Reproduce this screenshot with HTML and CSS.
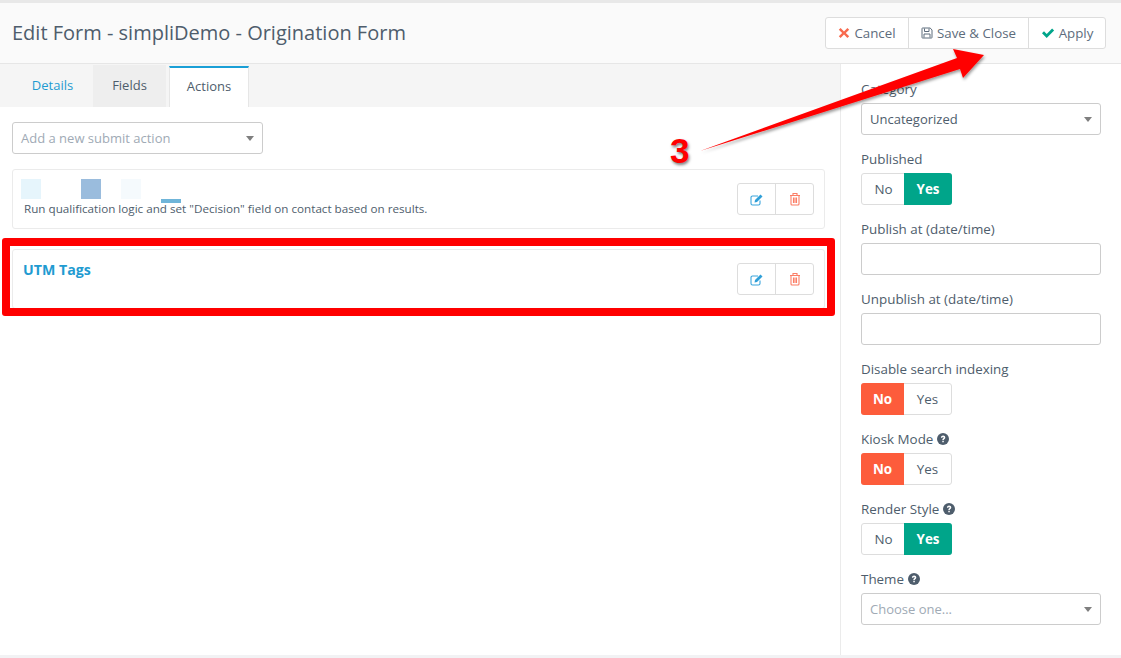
FILE: index.html
```html
<!DOCTYPE html>
<html lang="en">
<head>
    <meta charset="UTF-8">
    <title>Edit Form - simpliDemo - Origination Form</title>
    <link rel="stylesheet" href="styles.css">
</head>
<body>
    <div class="page">
        <!-- Header -->
        <header class="page-header">
            <h1>Edit Form - simpliDemo - Origination Form</h1>
            <div class="btn-group">
                <button class="btn btn-cancel">
                    <svg class="icon" viewBox="0 0 12 12"><path d="M2.6 1 6 4.400 9.400 1 11.200 2.800 7.800 6l3.400 3.200-1.800 1.800L6 7.600 2.600 11 .8 9.200 4.200 6 .8 2.800z" fill="#f86b4f"/></svg>
                    Cancel
                </button>
                <button class="btn btn-save">
                    <svg class="icon" viewBox="0 0 12 12"><path d="M1.500 1h7.600L11 2.900v7.600a.5.5 0 0 1-.5.5h-9a.5.5 0 0 1-.5-.5v-9a.5.5 0 0 1 .5-.5zM3.500 1.500v3h4.500v-3M3 10.500V7h6v3.500" fill="none" stroke="#5d6c7c" stroke-width="1"/></svg>
                    Save &amp; Close
                </button>
                <button class="btn btn-apply">
                    <svg class="icon icon-wide" viewBox="0 0 13 12"><path d="M.5 6.300 2.500 4.300l2.700 2.700 5.400-5.400 2 2-7.400 7.400z" fill="#00a58a"/></svg>
                    Apply
                </button>
            </div>
        </header>

        <div class="content">
            <!-- Main column -->
            <main class="main-col">
                <nav class="tabs">
                    <a class="tab tab-details">Details</a>
                    <a class="tab tab-fields">Fields</a>
                    <a class="tab tab-actions">Actions</a>
                </nav>

                <div class="tab-body">
                    <div class="select select-add">
                        <span class="placeholder">Add a new submit action</span>
                        <span class="caret"></span>
                    </div>

                    <div class="card">
                        <div class="card-text">
                            <div class="swatches">
                                <span class="swatch swatch-a"></span>
                                <span class="swatch swatch-b"></span>
                                <span class="swatch swatch-c"></span>
                                <span class="swatch swatch-d"></span>
                            </div>
                            <p class="card-desc">Run qualification logic and set "Decision" field on contact based on results.</p>
                        </div>
                        <div class="card-btns">
                            <button class="card-btn">
                                <svg class="icon-edit" viewBox="0 0 14 13"><path d="M10 7.500v3A1.500 1.500 0 0 1 8.500 12h-6A1.500 1.500 0 0 1 1 10.500v-6A1.500 1.500 0 0 1 2.500 3H8" fill="none" stroke="#3ba5dc" stroke-width="1.100"/><path d="M4.500 9.500 5 7l5.500-5.500 2 2L7 9z" fill="#2f9fd8"/></svg>
                            </button>
                            <button class="card-btn">
                                <svg class="icon-trash" viewBox="0 0 12 14"><path d="M1 3.500h10M4 3.500V1.500h4v2M2 3.500V12a1 1 0 0 0 1 1h6a1 1 0 0 0 1-1V3.500M4.500 5.500v5.500M6 5.500v5.500M7.500 5.500v5.500" fill="none" stroke="#fb7e66" stroke-width="1.100"/></svg>
                            </button>
                        </div>
                    </div>

                    <div class="card">
                        <div class="card-text">
                            <a class="card-title">UTM Tags</a>
                        </div>
                        <div class="card-btns">
                            <button class="card-btn">
                                <svg class="icon-edit" viewBox="0 0 14 13"><path d="M10 7.500v3A1.500 1.500 0 0 1 8.500 12h-6A1.500 1.500 0 0 1 1 10.500v-6A1.500 1.500 0 0 1 2.500 3H8" fill="none" stroke="#3ba5dc" stroke-width="1.100"/><path d="M4.500 9.500 5 7l5.500-5.500 2 2L7 9z" fill="#2f9fd8"/></svg>
                            </button>
                            <button class="card-btn">
                                <svg class="icon-trash" viewBox="0 0 12 14"><path d="M1 3.500h10M4 3.500V1.500h4v2M2 3.500V12a1 1 0 0 0 1 1h6a1 1 0 0 0 1-1V3.500M4.500 5.500v5.500M6 5.500v5.500M7.500 5.500v5.500" fill="none" stroke="#fb7e66" stroke-width="1.100"/></svg>
                            </button>
                        </div>
                    </div>
                </div>
            </main>

            <!-- Sidebar -->
            <aside class="side-col">
                <div class="field">
                    <label>Category</label>
                    <div class="select"><span class="value">Uncategorized</span><span class="caret"></span></div>
                </div>
                <div class="field">
                    <label>Published</label>
                    <div class="toggle"><span class="opt opt-no">No</span><span class="opt opt-yes on-yes">Yes</span></div>
                </div>
                <div class="field">
                    <label>Publish at (date/time)</label>
                    <div class="input"></div>
                </div>
                <div class="field">
                    <label>Unpublish at (date/time)</label>
                    <div class="input"></div>
                </div>
                <div class="field">
                    <label>Disable search indexing</label>
                    <div class="toggle"><span class="opt opt-no on-no">No</span><span class="opt opt-yes">Yes</span></div>
                </div>
                <div class="field">
                    <label>Kiosk Mode <svg class="help" viewBox="0 0 12 12"><circle cx="6" cy="6" r="6" fill="#4e5d6c"/><path d="M3.900 4.700C4 3.400 4.900 2.600 6.100 2.600c1.300 0 2.200.8 2.200 1.900 0 1.500-1.500 1.500-1.500 2.600H5.300c0-1.800 1.400-1.700 1.400-2.600 0-.4-.3-.6-.7-.6-.4 0-.7.300-.7.800zM5.300 7.800h1.500v1.500H5.300z" fill="#fff"/></svg></label>
                    <div class="toggle"><span class="opt opt-no on-no">No</span><span class="opt opt-yes">Yes</span></div>
                </div>
                <div class="field">
                    <label>Render Style <svg class="help" viewBox="0 0 12 12"><circle cx="6" cy="6" r="6" fill="#4e5d6c"/><path d="M3.900 4.700C4 3.400 4.900 2.600 6.100 2.600c1.300 0 2.200.8 2.200 1.900 0 1.500-1.500 1.500-1.500 2.600H5.300c0-1.800 1.400-1.700 1.400-2.600 0-.4-.3-.6-.7-.6-.4 0-.7.300-.7.800zM5.300 7.800h1.500v1.500H5.300z" fill="#fff"/></svg></label>
                    <div class="toggle"><span class="opt opt-no">No</span><span class="opt opt-yes on-yes">Yes</span></div>
                </div>
                <div class="field">
                    <label>Theme <svg class="help" viewBox="0 0 12 12"><circle cx="6" cy="6" r="6" fill="#4e5d6c"/><path d="M3.900 4.700C4 3.400 4.900 2.600 6.100 2.600c1.300 0 2.200.8 2.200 1.900 0 1.500-1.500 1.500-1.500 2.600H5.300c0-1.800 1.400-1.700 1.400-2.600 0-.4-.3-.6-.7-.6-.4 0-.7.300-.7.800zM5.300 7.800h1.500v1.500H5.300z" fill="#fff"/></svg></label>
                    <div class="select"><span class="placeholder">Choose one...</span><span class="caret"></span></div>
                </div>
            </aside>
        </div>

        <!-- Screenshot annotations, drawn over the page -->
        <div class="red-box"></div>
        <svg class="arrow" viewBox="0 0 1121 658" width="1121" height="658">
            <defs>
                <filter id="arrowShadow" x="-5%" y="-10%" width="110%" height="130%">
                    <feDropShadow dx="1" dy="2" stdDeviation="1.500" flood-color="#000" flood-opacity="0.4"/>
                </filter>
            </defs>
            <path d="M700 151 957 58 953 49 984 55 963 78 960 69z" fill="#ff0000" filter="url(#arrowShadow)"/>
        </svg>
        <span class="step-num">3</span>
    </div>
</body>
</html>
```

FILE: styles.css
```css
* {
    box-sizing: border-box;
}

body {
    margin: 0;
    font-family: 'Open Sans', sans-serif;
    font-size: 13px;
    color: #4e5d6c;
    background-color: #fff;
}

.page {
    position: relative;
    width: 1121px;
    height: 658px;
    overflow: hidden;
    padding-top: 3px;
    border-bottom: 3px solid #f2f2f4;
}

.page::before {
    content: "";
    position: absolute;
    top: 0;
    left: 0;
    right: 0;
    height: 3px;
    background-color: #e8e8e8;
}

.page-header {
    display: flex;
    justify-content: space-between;
    align-items: flex-start;
    height: 61px;
    padding: 14px 15px 0 12px;
    background-color: #fafafa;
    border-bottom: 1px solid #e6e6e6;
}

h1 {
    margin: 1px 0 0;
    font-size: 20px;
    font-weight: 400;
    line-height: 30px;
}

.btn-group {
    display: flex;
    height: 32px;
    background-color: #fff;
    border: 1px solid #ddd;
    border-radius: 3px;
}

.btn {
    display: flex;
    align-items: center;
    justify-content: center;
    gap: 4px;
    padding: 0;
    border: none;
    border-left: 1px solid #ddd;
    background: none;
    font-family: inherit;
    font-size: 13.300px;
    color: #5d6c7c;
}

.btn-cancel {
    width: 82px;
    border-left: none;
}

.btn-save {
    width: 120px;
}

.btn-apply {
    width: 77px;
}

.icon {
    width: 12px;
    height: 12px;
}

.icon-wide {
    width: 14px;
}

.content {
    display: flex;
    height: 591px;
}

.main-col {
    width: 841px;
    border-right: 1px solid #ebebeb;
}

.tabs {
    display: flex;
    align-items: flex-end;
    height: 43px;
    padding-left: 12px;
    background-color: #f5f5f5;
}

.tab {
    display: flex;
    align-items: center;
    justify-content: center;
    height: 42px;
    padding-bottom: 2px;
    font-size: 13px;
}

.tab-details {
    width: 81px;
    color: #1f9bd1;
}

.tab-fields {
    width: 73px;
    background-color: #eeeeee;
}

.tab-actions {
    width: 80px;
    height: 41px;
    margin-left: 3px;
    padding-bottom: 3px;
    background-color: #fff;
    border: 1px solid #e6e6e6;
    border-top: 2px solid #1a9fd6;
    border-bottom: none;
}

.tab-body {
    padding: 15px 15px 0 12px;
}

.select,
.input {
    display: flex;
    align-items: center;
    justify-content: space-between;
    height: 32px;
    padding: 0 8px;
    background-color: #fff;
    border: 1px solid #ccc;
    border-radius: 3px;
}

.select-add {
    width: 251px;
    margin-bottom: 15px;
}

.placeholder {
    color: #a0aab5;
}

.caret {
    width: 0;
    height: 0;
    border-left: 4px solid transparent;
    border-right: 4px solid transparent;
    border-top: 5px solid #7f7f7f;
}

.card {
    display: flex;
    justify-content: space-between;
    height: 60px;
    margin-bottom: 20px;
    padding: 9px 10px 0 8px;
    background-color: #fff;
    border: 1px solid #ebebeb;
    border-radius: 3px;
}

.card-text {
    flex: 1;
}

.swatches {
    display: flex;
    align-items: flex-start;
    gap: 20px;
    height: 24px;
}

.swatch {
    width: 20px;
    height: 20px;
}

.swatch-a {
    margin-right: 20px;
    background-color: #e6f5fc;
}

.swatch-b {
    background-color: #9abcdd;
}

.swatch-c {
    background-color: #f5fafd;
}

.swatch-d {
    height: 4px;
    margin-top: 20px;
    background-color: #6fb5d9;
}

.card-desc {
    margin: -3px 0 0 3px;
    font-size: 11.670px;
    line-height: 17px;
}

.card-title {
    display: block;
    margin: 1px 0 0 2px;
    font-size: 14.200px;
    font-weight: 700;
    line-height: 20px;
    color: #1f9bd1;
}

.card-btns {
    display: flex;
    height: 32px;
    margin-top: 4px;
    border: 1px solid #ddd;
    border-radius: 3px;
}

.card-btn {
    display: flex;
    align-items: center;
    justify-content: center;
    width: 37px;
    padding: 0;
    border: none;
    background: none;
}

.card-btn + .card-btn {
    width: 38px;
    border-left: 1px solid #ddd;
}

.icon-edit {
    width: 14px;
    height: 13px;
}

.icon-trash {
    width: 12px;
    height: 14px;
}

.side-col {
    flex: 1;
    padding: 16px 20px 0 20px;
}

.field {
    margin-bottom: 15px;
}

label {
    display: flex;
    align-items: center;
    gap: 4px;
    height: 18px;
    margin-bottom: 5px;
    font-size: 13.400px;
}

.help {
    width: 12px;
    height: 12px;
}

.toggle {
    display: flex;
    width: 91px;
    height: 32px;
    font-size: 13.400px;
    background-color: #fff;
    border: 1px solid #ddd;
    border-radius: 3px;
}

.opt {
    display: flex;
    align-items: center;
    justify-content: center;
}

.opt-no {
    width: 43px;
}

.opt-yes {
    flex: 1;
}

.on-yes {
    margin: -1px;
    font-weight: 700;
    color: #fff;
    background-color: #00a58a;
    border-radius: 0 3px 3px 0;
}

.on-no {
    margin: -1px 0 -1px -1px;
    font-weight: 700;
    color: #fff;
    background-color: #fd5c3b;
    border-radius: 3px 0 0 3px;
}

.red-box {
    position: absolute;
    left: 2px;
    top: 238px;
    width: 833px;
    height: 78px;
    border: 8px solid #ff0000;
    border-radius: 3px;
}

.arrow {
    position: absolute;
    left: 0;
    top: 0;
}

.step-num {
    position: absolute;
    left: 670px;
    top: 130px;
    font-family: 'Liberation Sans', sans-serif;
    font-size: 35px;
    font-weight: 700;
    line-height: 42px;
    color: #ff0000;
    -webkit-text-stroke: 4px #fff;
    paint-order: stroke fill;
    text-shadow: 1px 2px 3px rgba(0, 0, 0, 0.5);
}
```
